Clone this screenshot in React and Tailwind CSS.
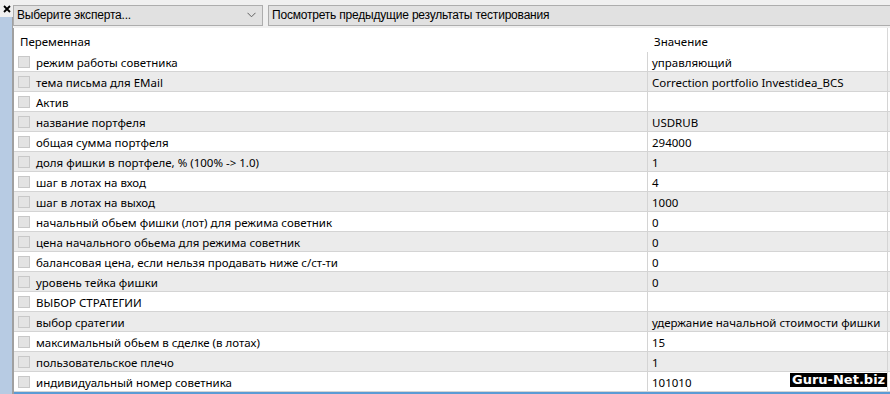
import React from "react";

const rows = [
  ["режим работы советника", "управляющий"],
  ["тема письма для EMail", "Correction portfolio Investidea_BCS"],
  ["Актив", ""],
  ["название портфеля", "USDRUB"],
  ["общая сумма портфеля", "294000"],
  ["доля фишки в портфеле, % (100% -> 1.0)", "1"],
  ["шаг в лотах на вход", "4"],
  ["шаг в лотах на выход", "1000"],
  ["начальный обьем фишки (лот) для режима советник", "0"],
  ["цена начального обьема для режима советник", "0"],
  ["балансовая цена, если нельзя продавать ниже с/ст-ти", "0"],
  ["уровень тейка фишки", "0"],
  ["ВЫБОР СТРАТЕГИИ", ""],
  ["выбор сратегии", "удержание начальной стоимости фишки"],
  ["максимальный обьем в сделке (в лотах)", "15"],
  ["пользовательское плечо", "1"],
  ["индивидуальный номер советника", "101010"],
];

export default function App() {
  return (
    <div
      className="w-[890px] h-[394px] flex bg-white overflow-hidden relative text-[11.5px] text-black"
      style={{ fontFamily: '"Noto Sans", "Liberation Sans", sans-serif' }}
    >
      {/* left strip */}
      <div className="w-[13px] flex flex-col shrink-0">
        <div className="h-[17px] bg-[#f0f0f0] flex items-start justify-center pt-[2px]">
          <svg width="8" height="8" viewBox="0 0 8 8" className="mt-[3px]">
            <path d="M1 1 L7 7 M7 1 L1 7" stroke="#000" strokeWidth="1.8" />
          </svg>
        </div>
        <div className="flex-1 bg-[#b7cbe3] border-r border-[#a0a0a0]"></div>
      </div>
      {/* main */}
      <div className="flex-1 flex flex-col min-w-0">
        <div
          className="h-[28px] shrink-0 bg-[#f0f0f0] flex items-center pt-[2px] gap-[5px] text-[12px]"
          style={{ fontFamily: '"Liberation Sans", Arial, sans-serif', letterSpacing: "-0.2px" }}
        >
          <div className="w-[250px] h-[21px] bg-[#e1e1e1] border border-[#adadad] flex items-center pl-[3px] pr-[6px] justify-between">
            <span>Выберите эксперта...</span>
            <svg width="9" height="6" viewBox="0 0 9 6">
              <path d="M0.5 0.8 L4.5 4.8 L8.5 0.8" fill="none" stroke="#606060" strokeWidth="1" />
            </svg>
          </div>
          <div className="flex-1 h-[21px] bg-[#e1e1e1] border border-[#adadad] border-r-0 flex items-center pl-[3px]">
            <span>Посмотреть предыдущие результаты тестирования</span>
          </div>
        </div>
        <div className="flex-1 flex flex-col border-l border-[#a0a0a0] min-h-0">
          <div className="h-[24px] flex shrink-0">
            <div className="w-[634px] pl-[6px] flex items-center pt-[3px]">Переменная</div>
            <div className="w-[240px] pl-[6px] flex items-center pt-[3px] border-r border-[#d8d8d8]">Значение</div>
          </div>
          {rows.map(([k, v], i) => (
            <div
              key={i}
              className={`h-[20px] flex shrink-0 border-b border-[#d4d4d4] whitespace-nowrap ${i % 2 === 1 ? "bg-[#ebebeb]" : "bg-white"}`}
            >
              <div className="w-[634px] flex items-center pl-[4px] gap-[6px] border-r border-[#d4d4d4] pt-[1px]">
                <div className="w-[12px] h-[12px] bg-[#e3e3e3] border border-[#c8c8c8]"></div>
                <span className="pt-[1px]">{k}</span>
              </div>
              <div className="w-[240px] flex items-center pl-[4px] pt-[2px] border-r border-[#d4d4d4] overflow-hidden">{v}</div>
            </div>
          ))}
          <div className="flex-1"></div>
          <div className="h-[2px] shrink-0 bg-[#5b9bd5]"></div>
        </div>
      </div>
      <div
        className="absolute left-[790px] top-[373px] bg-black text-white font-bold text-[13px] leading-[14px] px-[2px]"
        style={{ fontFamily: '"DejaVu Sans", sans-serif' }}
      >
        Guru-Net.biz
      </div>
    </div>
  );
}
